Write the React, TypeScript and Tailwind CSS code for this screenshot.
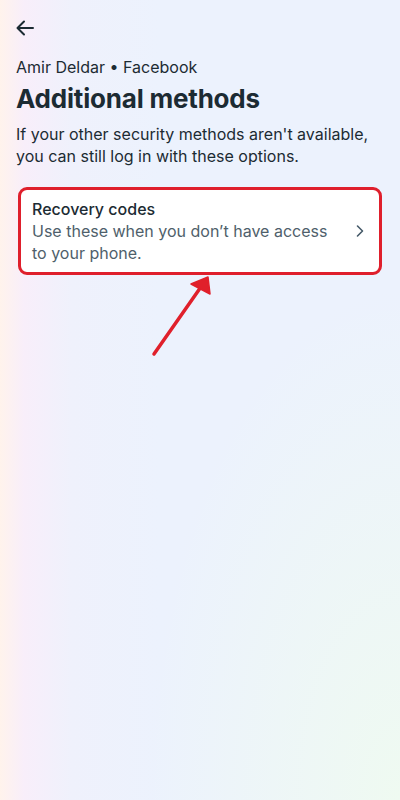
import React from 'react';

function BackIcon() {
  return (
    <svg width="20" height="20" viewBox="0 0 20 20" fill="none">
      <path d="M18 10H3M9 3.5L2.5 10L9 16.5" stroke="#1c2b33" strokeWidth="2" strokeLinecap="round" strokeLinejoin="round" />
    </svg>
  );
}

function Chevron() {
  return (
    <svg width="10" height="14" viewBox="0 0 10 14" fill="none">
      <path d="M2.5 2L7.5 7L2.5 12" stroke="#465a69" strokeWidth="1.6" strokeLinecap="round" strokeLinejoin="round" />
    </svg>
  );
}

function PointerArrow() {
  return (
    <svg className="absolute left-0 top-0 pointer-events-none" width="400" height="400" viewBox="0 0 400 400">
      <path d="M154 354L203 284" stroke="#e0202b" strokeWidth="3.5" strokeLinecap="round" />
      <path d="M208 277L191 284L210 294Z" fill="#e0202b" stroke="#e0202b" strokeWidth="1.5" strokeLinejoin="round" />
    </svg>
  );
}

export default function App() {
  return (
    <div
      className="relative w-[400px] h-[800px] overflow-hidden bg-[radial-gradient(ellipse_at_100%_100%,#effaf1_0%,rgba(239,250,241,0)_45%),linear-gradient(90deg,#fff3ec_0%,#f8eefa_6%,#eff1fc_18%,#ecf2fd_40%,#ecf2fd_100%)]"
      style={{ fontFamily: 'Inter, Roboto, "Noto Sans", sans-serif' }}
    >
      <div className="px-4 pt-[18px]">
        <button className="block -ml-[1px]">
          <BackIcon />
        </button>
        <p className="mt-[19px] text-[16px] leading-[20px] text-[#1c2b33]">Amir Deldar • Facebook</p>
        <h1 className="mt-[6px] text-[26px] leading-[32px] font-bold text-[#1c2b33] tracking-[-0.2px]">
          Additional methods
        </h1>
        <p className="mt-[8px] text-[16px] leading-[22px] text-[#1c2b33]">
          If your other security methods aren't available, you can still log in with these options.
        </p>
        <div className="mt-[20px] mx-[2px] rounded-[9px] border-[3px] border-[#df1f2c] bg-white">
          <div className="flex items-center gap-3 pl-[11px] pr-[14px] py-[8px]">
            <div className="flex-1">
              <p className="text-[16px] leading-[22px] font-medium text-[#1c2b33]">Recovery codes</p>
              <p className="text-[16px] leading-[22px] text-[#4f5f6b]">
                Use these when you don’t have access to your phone.
              </p>
            </div>
            <Chevron />
          </div>
        </div>
      </div>
      <PointerArrow />
    </div>
  );
}
